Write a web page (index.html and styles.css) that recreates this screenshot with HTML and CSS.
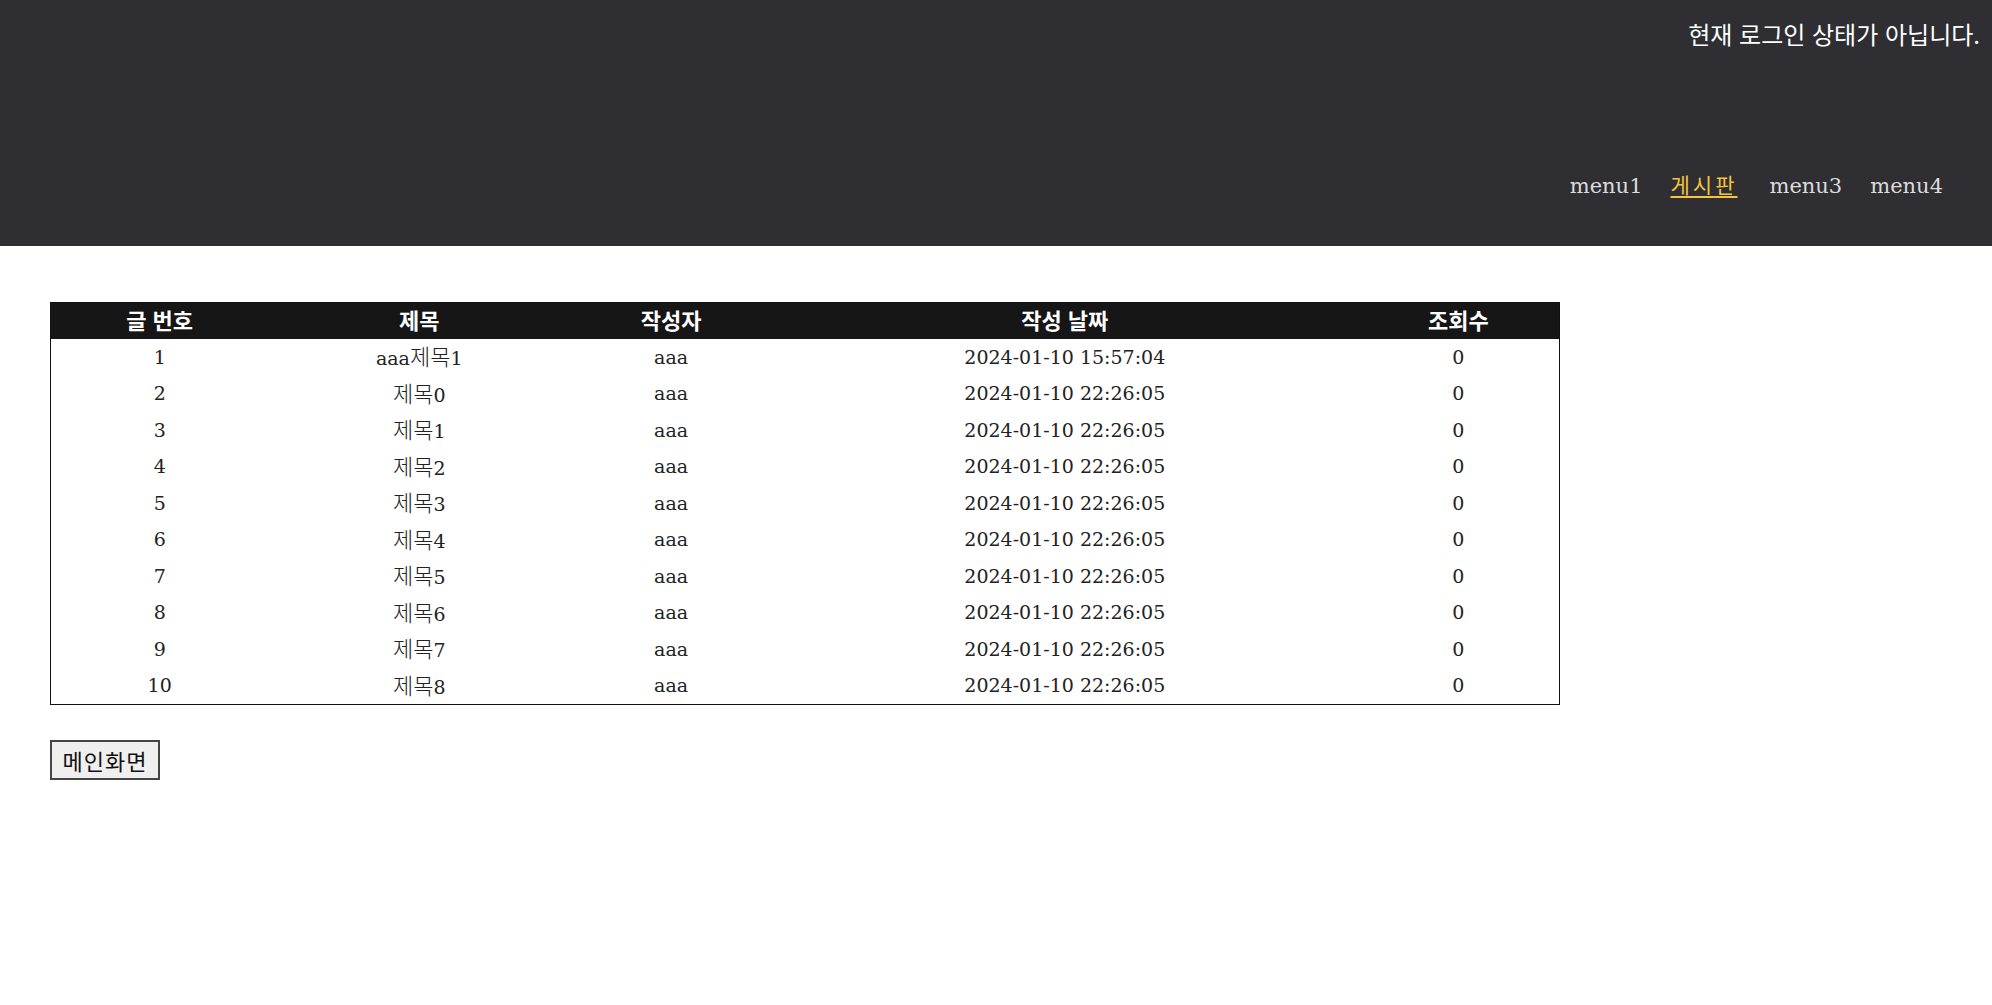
FILE: index.html
```html
<!DOCTYPE html>
<html lang="ko">

<head>
    <meta charset="UTF-8" />
    <meta name="viewport" content="width=device-width, initial-scale=1.0" />
    <title>게시판</title>
    <link rel="stylesheet" href="styles.css">
</head>

<body>

    <header class="top">
        <div class="login-state">현재 로그인 상태가 아닙니다.</div>
        <ul class="menu">
            <li><a href="#">menu1</a></li>
            <li><a href="#" class="active">게시판</a></li>
            <li><a href="#">menu3</a></li>
            <li><a href="#">menu4</a></li>
        </ul>
    </header>

    <main class="content">
        <table class="board">
            <thead>
                <tr>
                    <th class="col-no">글 번호</th>
                    <th class="col-title">제목</th>
                    <th class="col-writer">작성자</th>
                    <th class="col-date">작성 날짜</th>
                    <th class="col-hit">조회수</th>
                </tr>
            </thead>
            <tbody>
                <tr><td>1</td><td>aaa<span class="kr">제목</span>1</td><td>aaa</td><td>2024-01-10 15:57:04</td><td>0</td></tr>
                <tr><td>2</td><td><span class="kr">제목</span>0</td><td>aaa</td><td>2024-01-10 22:26:05</td><td>0</td></tr>
                <tr><td>3</td><td><span class="kr">제목</span>1</td><td>aaa</td><td>2024-01-10 22:26:05</td><td>0</td></tr>
                <tr><td>4</td><td><span class="kr">제목</span>2</td><td>aaa</td><td>2024-01-10 22:26:05</td><td>0</td></tr>
                <tr><td>5</td><td><span class="kr">제목</span>3</td><td>aaa</td><td>2024-01-10 22:26:05</td><td>0</td></tr>
                <tr><td>6</td><td><span class="kr">제목</span>4</td><td>aaa</td><td>2024-01-10 22:26:05</td><td>0</td></tr>
                <tr><td>7</td><td><span class="kr">제목</span>5</td><td>aaa</td><td>2024-01-10 22:26:05</td><td>0</td></tr>
                <tr><td>8</td><td><span class="kr">제목</span>6</td><td>aaa</td><td>2024-01-10 22:26:05</td><td>0</td></tr>
                <tr><td>9</td><td><span class="kr">제목</span>7</td><td>aaa</td><td>2024-01-10 22:26:05</td><td>0</td></tr>
                <tr><td>10</td><td><span class="kr">제목</span>8</td><td>aaa</td><td>2024-01-10 22:26:05</td><td>0</td></tr>
            </tbody>
        </table>

        <button class="home-btn">메인화면</button>
    </main>

</body>

</html>
```

FILE: styles.css
```css
html,
body {
    margin: 0;
    padding: 0;
}

body {
    background: #fff;
    font-family: "DejaVu Serif", "Noto Sans CJK KR", serif;
    color: #222;
}

.top {
    background-color: #2f2e33;
    height: 246px;
    box-sizing: border-box;
    padding: 17px 12px 0 0;
    display: flex;
    flex-direction: column;
    align-items: flex-end;
}

.login-state {
    font-family: "Noto Sans CJK KR", sans-serif;
    font-size: 24px;
    color: #fff;
    line-height: 34px;
}

.menu {
    list-style: none;
    margin: 118px 37px 0 0;
    padding: 0;
    display: flex;
    align-items: baseline;
    gap: 28px;
}

.menu a {
    font-size: 21px;
    color: #dcdcdc;
    text-decoration: none;
}

.menu a.active {
    color: #f2c53d;
    letter-spacing: 3px;
    margin: 0 4px 0 0;
    text-decoration: underline;
    text-decoration-thickness: 2px;
    text-underline-offset: 3px;
}

.content {
    padding: 56px 50px;
}

.board {
    width: 1510px;
    border-collapse: collapse;
    border: 1px solid #111;
    font-size: 19px;
}

.board th {
    background-color: #161616;
    color: #fff;
    font-family: "Noto Sans CJK KR", sans-serif;
    font-weight: bold;
    font-size: 22px;
    line-height: 1;
    height: 36px;
    padding: 0 0 4px;
    box-sizing: border-box;
}

.board td {
    text-align: center;
    height: 36.5px;
    padding: 0;
}

.board .kr {
    font-family: "Noto Sans CJK KR", sans-serif;
    font-weight: 300;
    font-size: 22px;
    line-height: 1;
}

.col-no {
    width: 218px;
}

.col-title {
    width: 302px;
}

.col-writer {
    width: 202px;
}

.col-date {
    width: 586px;
}

.col-hit {
    width: 202px;
}

.home-btn {
    margin-top: 35px;
    font-family: "Noto Sans CJK KR", sans-serif;
    font-size: 22px;
    letter-spacing: 1px;
    color: #111;
    background-color: #efefef;
    border: 2px solid #444;
    padding: 0;
    height: 40px;
    width: 110px;
}
```
